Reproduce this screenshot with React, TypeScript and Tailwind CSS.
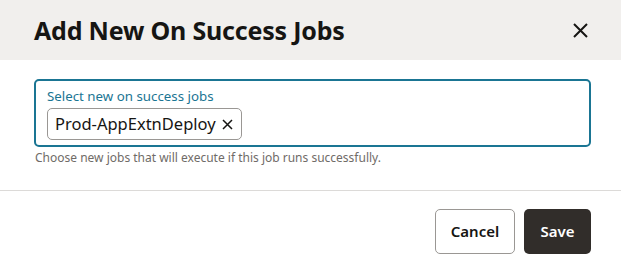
import React from "react";

const App = () => {
  return (
    <div
      className="w-[621px] h-[272px] bg-white flex flex-col"
      style={{ fontFamily: '"Noto Sans", "Open Sans", sans-serif' }}
    >
      <div className="h-[60px] bg-[#f1efed] flex items-center justify-between pl-[34px] pr-[33px]">
        <h1 className="text-[25px] leading-[30px] font-bold text-[#161513] tracking-[-0.2px]">
          Add New On Success Jobs
        </h1>
        <button className="w-[16px] h-[16px] flex items-center justify-center">
          <svg width="15" height="15" viewBox="0 0 15 15">
            <path d="M1 1L14 14M14 1L1 14" stroke="#161513" strokeWidth="2" />
          </svg>
        </button>
      </div>
      <div className="pl-[34px] pr-[30px] pt-[19px] pb-[24px] border-b border-[#dcdad8]">
        <div className="h-[68px] border-2 border-[#1a7593] rounded-[5px] pl-[11px] pr-3 pt-[7px]">
          <div className="text-[13.3px] leading-[17px] text-[#1a7593]">
            Select new on success jobs
          </div>
          <div className="mt-[3px] inline-flex items-center h-[32px] border border-[#9a9794] rounded-[5px] pl-[7px] pr-[8px] gap-[6px]">
            <span className="text-[16.5px] text-[#161513]">Prod-AppExtnDeploy</span>
            <svg width="11" height="11" viewBox="0 0 11 11">
              <path d="M1 1L10 10M10 1L1 10" stroke="#161513" strokeWidth="1.5" />
            </svg>
          </div>
        </div>
        <p className="mt-[3px] pl-[1px] text-[12px] leading-[16px] text-[#6f6b67]">
          Choose new jobs that will execute if this job runs successfully.
        </p>
      </div>
      <div className="flex justify-end gap-[9px] pr-[30px] pt-[18px]">
        <button className="w-[80px] h-[45px] border border-[#9a9794] rounded-[5px] bg-white text-[15px] font-semibold text-[#161513]">
          Cancel
        </button>
        <button className="w-[67px] h-[45px] rounded-[5px] bg-[#312d2a] text-[15px] font-semibold text-white">
          Save
        </button>
      </div>
    </div>
  );
};

export default App;
